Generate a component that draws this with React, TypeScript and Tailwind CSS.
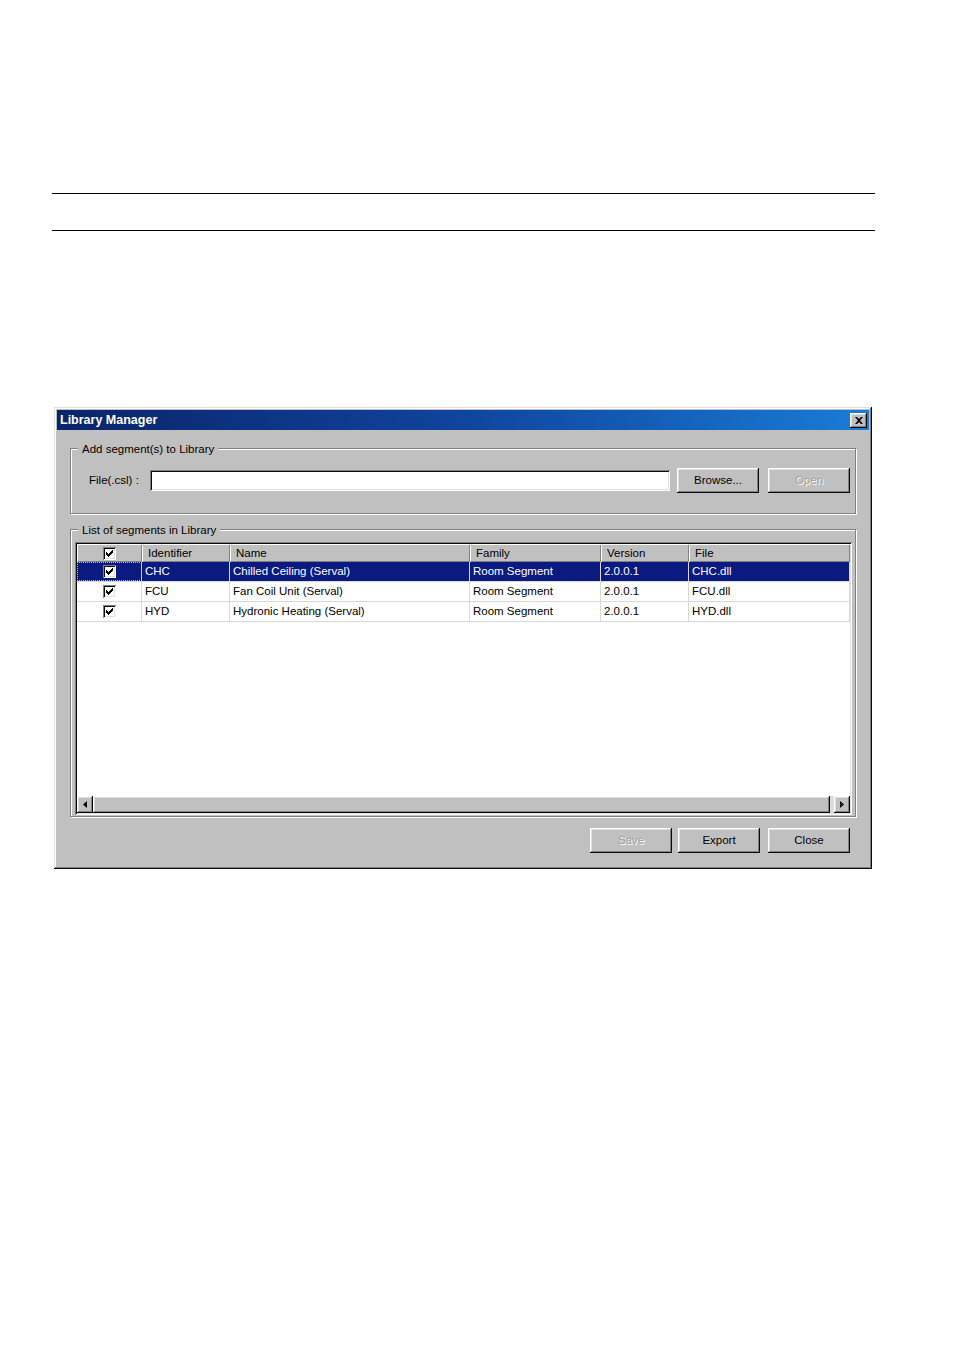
import React from "react";

const raised =
  "shadow-[inset_-1px_-1px_#0a0a0a,inset_1px_1px_#ffffff,inset_-2px_-2px_#808080,inset_2px_2px_#dfdfdf]";
const sunken =
  "shadow-[inset_1px_1px_#808080,inset_-1px_-1px_#ffffff,inset_2px_2px_#0a0a0a,inset_-2px_-2px_#dfdfdf]";
const etched =
  "border border-[#808080] shadow-[inset_1px_1px_0_#ffffff,1px_1px_0_#ffffff]";

const columns = [
  { label: "", width: "w-[65px]" },
  { label: "Identifier", width: "w-[88px]" },
  { label: "Name", width: "w-[240px]" },
  { label: "Family", width: "w-[131px]" },
  { label: "Version", width: "w-[88px]" },
  { label: "File", width: "flex-1" },
];

const rows = [
  { id: "CHC", name: "Chilled Ceiling (Serval)", file: "CHC.dll" },
  { id: "FCU", name: "Fan Coil Unit (Serval)", file: "FCU.dll" },
  { id: "HYD", name: "Hydronic Heating (Serval)", file: "HYD.dll" },
];

const CheckBox = () => (
  <div className={`w-[13px] h-[13px] bg-white ${sunken} flex items-center justify-center`}>
    <svg width="7" height="7" viewBox="0 0 7 7">
      <path d="M0 2h1v1h1v1h1v-1h1v-1h1v-1h1v-1h1v3h-1v1h-1v1h-1v1h-1v1h-1v-1h-1v-1h-1z" fill="#000" />
    </svg>
  </div>
);

const Button = ({ label, disabled }: { label: string; disabled?: boolean }) => (
  <div
    className={`w-[82px] h-[25px] pt-[1px] flex items-center justify-center bg-[#c0c0c0] ${raised} ${
      disabled ? "text-[#a0a0a0] [text-shadow:1px_1px_0_#ffffff]" : "text-black"
    }`}
  >
    {label}
  </div>
);

const Arrow = ({ dir }: { dir: "left" | "right" }) => (
  <div className={`w-[16px] h-full bg-[#c0c0c0] ${raised} flex items-center justify-center`}>
    <svg width="4" height="7" viewBox="0 0 4 7">
      {dir === "left" ? <path d="M4 0v7L0 3.5z" fill="#000" /> : <path d="M0 0v7l4-3.5z" fill="#000" />}
    </svg>
  </div>
);

export default function App() {
  return (
    <div className="w-[954px] h-[1350px] bg-white pt-[193px] font-['Liberation_Sans',Arial,sans-serif] text-[11.5px] text-black">
      <div className="ml-[52px] w-[823px] h-[38px] border-y border-black" />

      <div className="mt-[176px] ml-[54px] w-[818px] h-[462px] bg-[#c0c0c0] p-[3px] shadow-[inset_-1px_-1px_#0a0a0a,inset_1px_1px_#dfdfdf,inset_-2px_-2px_#808080,inset_2px_2px_#ffffff]">
        {/* title bar */}
        <div className="h-[20px] flex items-center justify-between pl-[3px] pr-[2px] bg-gradient-to-r from-[#0a246a] via-[#10449e] to-[#1a7cd6]">
          <span className="text-white font-bold text-[12.5px] leading-none">Library Manager</span>
          <div className={`w-[17px] h-[15px] bg-[#c0c0c0] ${raised} flex items-center justify-center`}>
            <svg width="8" height="7" viewBox="0 0 8 7">
              <path d="M0 0h2l2 2 2-2h2L5 3.5 8 7H6L4 5 2 7H0l3-3.5z" fill="#000" />
            </svg>
          </div>
        </div>

        {/* add segment group */}
        <div className={`relative mt-[18px] mx-[13px] h-[66px] ${etched} pt-[19px] pl-[18px] flex items-start`}>
          <span className="absolute -top-[7px] left-[7px] px-[4px] bg-[#c0c0c0] leading-[14px]">
            Add segment(s) to Library
          </span>
          <div className="flex items-center h-[25px]">
            <span className="w-[61px]">File(.csl) :</span>
            <div className={`w-[520px] h-[21px] bg-white ${sunken}`} />
            <div className="ml-[7px]">
              <Button label="Browse..." />
            </div>
            <div className="ml-[9px]">
              <Button label="Open" disabled />
            </div>
          </div>
        </div>

        {/* list group */}
        <div className={`relative mt-[15px] mx-[13px] h-[288px] ${etched} pt-[12px] pl-[4px] pr-[3px]`}>
          <span className="absolute -top-[7px] left-[7px] px-[4px] bg-[#c0c0c0] leading-[14px]">
            List of segments in Library
          </span>
          <div className={`h-[273px] bg-white ${sunken} p-[2px] flex flex-col`}>
            <div className="flex h-[18px] bg-[#c0c0c0]">
              {columns.map((c, i) => (
                <div
                  key={i}
                  className={`${c.width} h-full flex items-center shadow-[inset_1px_1px_#ffffff,inset_-1px_-1px_#808080] ${
                    i === 0 ? "justify-center" : "pl-[6px] pt-[1px]"
                  }`}
                >
                  {i === 0 ? <CheckBox /> : c.label}
                </div>
              ))}
            </div>
            <div className="flex-1">
              {rows.map((r, ri) => {
                const sel = ri === 0;
                const cells = [r.id, r.name, "Room Segment", "2.0.0.1", r.file];
                return (
                  <div key={r.id} className="flex h-[20px] border-b border-[#d8d8d8]">
                    <div
                      className={`w-[65px] flex items-center justify-center border-r border-[#d8d8d8] ${
                        sel ? "bg-[#0a1a80] outline-1 outline-dotted outline-[#d8c860] -outline-offset-1" : ""
                      }`}
                    >
                      <CheckBox />
                    </div>
                    {cells.map((t, ci) => (
                      <div
                        key={ci}
                        className={`${columns[ci + 1].width} flex items-center pl-[3px] pt-[1px] border-r border-[#d8d8d8] ${
                          sel ? "bg-[#0a1a80] text-white" : ""
                        }`}
                      >
                        {t}
                      </div>
                    ))}
                  </div>
                );
              })}
            </div>
            {/* horizontal scrollbar */}
            <div className="h-[17px] flex bg-[#dcdcdc]">
              <Arrow dir="left" />
              <div className={`flex-1 mr-[4px] bg-[#c0c0c0] ${raised}`} />
              <Arrow dir="right" />
            </div>
          </div>
        </div>

        {/* bottom buttons */}
        <div className="mt-[11px] flex justify-end gap-[6px] pr-[19px]">
          <Button label="Save" disabled />
          <Button label="Export" />
          <div className="ml-[2px]">
            <Button label="Close" />
          </div>
        </div>
      </div>
    </div>
  );
}
